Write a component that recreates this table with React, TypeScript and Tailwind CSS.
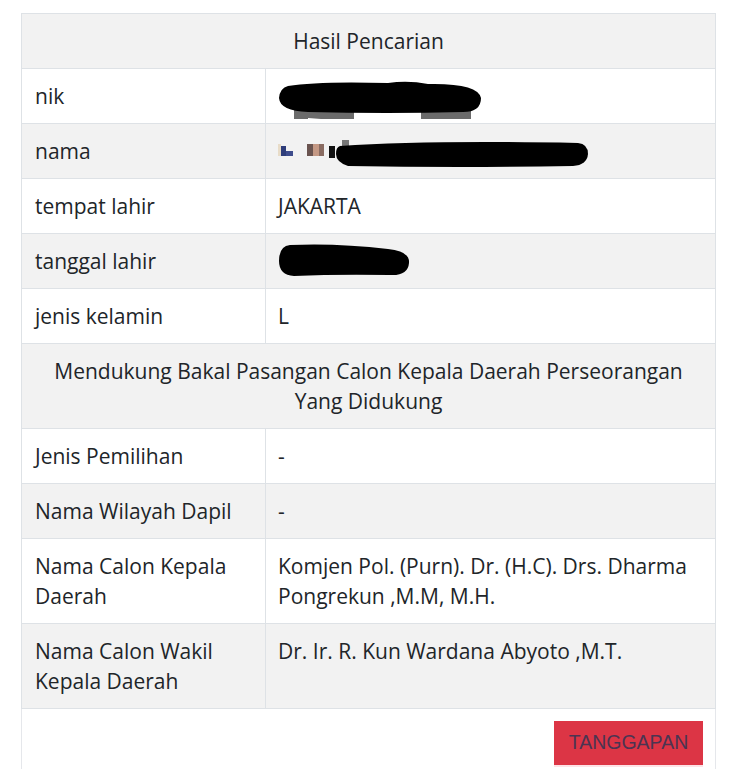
import React from "react";

type TRow = {
  label: string;
  value?: React.ReactNode;
};

const Blob = ({ kind }: { kind: "nik" | "nama" | "tgl" }) => {
  if (kind === "nik") {
    return (
      <svg width="210" height="40" viewBox="0 0 210 40" className="block -mb-[10px]">
        <rect x="16" y="28" width="60" height="10" fill="#6b6b6b" />
        <rect x="143" y="28" width="50" height="10" fill="#6b6b6b" />
        <path d="M30 37 Q110 44 200 39 L200 40 L30 40 Z" fill="#ffffff" />
        <path d="M10 5 Q40 0 110 2 Q130 -1 150 3 Q200 2 203 17 Q203 31 185 31 Q110 33 30 31 Q2 30 1 17 Q2 7 10 5 Z" fill="#000" />
      </svg>
    );
  }
  if (kind === "nama") {
    return (
      <svg width="320" height="34" viewBox="0 0 320 34" className="block -my-[2px]">
        <rect x="0" y="10" width="3" height="12" fill="#e8dcc8" />
        <rect x="3" y="12" width="5" height="10" fill="#2e3d7a" />
        <rect x="8" y="17" width="7" height="5" fill="#3e4c8c" />
        <rect x="29" y="10" width="6" height="12" fill="#6a5450" />
        <rect x="35" y="10" width="6" height="12" fill="#c49884" />
        <rect x="41" y="10" width="5" height="12" fill="#8a6c62" />
        <rect x="51" y="12" width="6" height="12" fill="#111" />
        <rect x="64" y="6" width="7" height="6" fill="#777" />
        <path d="M62 12 Q150 6 300 9 Q310 10 310 20 Q309 31 295 32 Q180 34 70 32 Q58 28 58 20 Q58 13 62 12 Z" fill="#000" />
      </svg>
    );
  }
  return (
    <svg width="135" height="36" viewBox="0 0 135 36" className="block -my-[3px]">
      <path d="M12 2 Q60 0 110 6 Q132 8 131 20 Q130 33 112 32 Q60 31 16 33 Q1 32 1 18 Q1 3 12 2 Z" fill="#000" />
    </svg>
  );
};

const topRows: TRow[] = [
  { label: "nik", value: <Blob kind="nik" /> },
  { label: "nama", value: <Blob kind="nama" /> },
  { label: "tempat lahir", value: "JAKARTA" },
  { label: "tanggal lahir", value: <Blob kind="tgl" /> },
  { label: "jenis kelamin", value: "L" },
];

const bottomRows: TRow[] = [
  { label: "Jenis Pemilihan", value: "-" },
  { label: "Nama Wilayah Dapil", value: "-" },
  {
    label: "Nama Calon Kepala Daerah",
    value: "Komjen Pol. (Purn). Dr. (H.C). Drs. Dharma Pongrekun ,M.M, M.H.",
  },
  {
    label: "Nama Calon Wakil Kepala Daerah",
    value: "Dr. Ir. R. Kun Wardana Abyoto ,M.T.",
  },
];

const App = () => {
  let stripe = 0;
  const bg = () => (stripe++ % 2 === 0 ? "bg-[#f2f2f2]" : "bg-white");

  return (
    <div
      className="min-h-[769px] bg-white pt-[13px] pl-[21px] text-[#212529]"
      style={{ fontFamily: '"Open Sans", "Noto Sans", sans-serif' }}
    >
      <div className="w-[695px]">
        <table className="w-full border-collapse text-[21px] leading-[30px]">
          <tbody>
            <tr className={bg()}>
              <td colSpan={2} className="border border-[#dee2e6] px-3 py-3 text-center">
                Hasil Pencarian
              </td>
            </tr>
            {topRows.map((r) => (
              <tr key={r.label} className={bg()}>
                <td className="w-[244px] border border-[#dee2e6] px-[13px] py-3 align-top">
                  {r.label}
                </td>
                <td className="border border-[#dee2e6] px-3 py-3 align-top">{r.value}</td>
              </tr>
            ))}
            <tr className={bg()}>
              <td colSpan={2} className="border border-[#dee2e6] px-3 py-3 text-center">
                Mendukung Bakal Pasangan Calon Kepala Daerah Perseorangan Yang Didukung
              </td>
            </tr>
            {bottomRows.map((r) => (
              <tr key={r.label} className={bg()}>
                <td className="w-[244px] border border-[#dee2e6] px-[13px] py-3 pr-4 align-top">
                  {r.label}
                </td>
                <td className="border border-[#dee2e6] px-3 py-3 align-top">{r.value}</td>
              </tr>
            ))}
          </tbody>
        </table>
        <div className="flex justify-end border-x border-[#e5e7eb] pt-3 pb-1 pr-3">
          <button
            className="h-[44px] w-[149px] bg-[#dc3545] text-[19.5px] text-[#4b3452] shadow-[0_2px_0_#fde2e6]"
            style={{ fontFamily: '"Liberation Sans", Arial, sans-serif' }}
          >
            TANGGAPAN
          </button>
        </div>
      </div>
    </div>
  );
};

export default App;
